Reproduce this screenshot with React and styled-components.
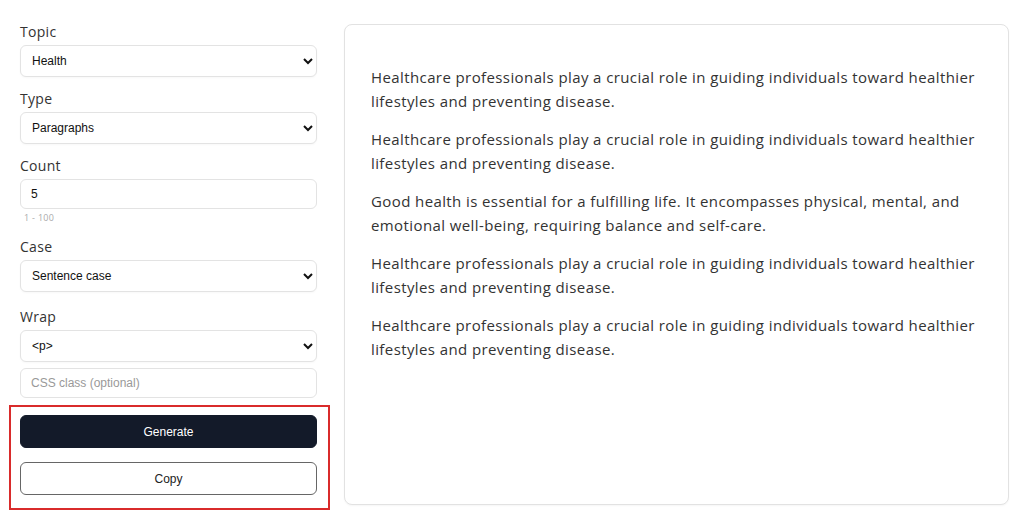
import React from "react";
import styled, { createGlobalStyle } from "styled-components";

const GlobalStyle = createGlobalStyle`
  * { box-sizing: border-box; }
  body {
    margin: 0;
    background: #ffffff;
    font-family: "Open Sans", "Liberation Sans", sans-serif;
  }
`;

const paragraphs = [
  "Healthcare professionals play a crucial role in guiding individuals toward healthier lifestyles and preventing disease.",
  "Healthcare professionals play a crucial role in guiding individuals toward healthier lifestyles and preventing disease.",
  "Good health is essential for a fulfilling life. It encompasses physical, mental, and emotional well-being, requiring balance and self-care.",
  "Healthcare professionals play a crucial role in guiding individuals toward healthier lifestyles and preventing disease.",
  "Healthcare professionals play a crucial role in guiding individuals toward healthier lifestyles and preventing disease.",
];

export default function App() {
  return (
    <>
      <GlobalStyle />
      <Page>
        <Sidebar>
          <Field>
            <Label>Topic</Label>
            <Select defaultValue="Health">
              <option>Health</option>
              <option>Technology</option>
            </Select>
          </Field>
          <Field>
            <Label>Type</Label>
            <Select defaultValue="Paragraphs">
              <option>Paragraphs</option>
              <option>Sentences</option>
            </Select>
          </Field>
          <Field>
            <Label>Count</Label>
            <Input defaultValue="5" />
            <Hint>1 - 100</Hint>
          </Field>
          <Field $gap={15}>
            <Label>Case</Label>
            <Select defaultValue="Sentence case">
              <option>Sentence case</option>
              <option>Title Case</option>
            </Select>
          </Field>
          <Field $gap={6}>
            <Label>Wrap</Label>
            <Select defaultValue="<p>">
              <option>{"<p>"}</option>
              <option>None</option>
            </Select>
          </Field>
          <Field $gap={7}>
            <Input placeholder="CSS class (optional)" />
          </Field>
          <Highlight>
            <Button $primary>Generate</Button>
            <Button>Copy</Button>
          </Highlight>
        </Sidebar>
        <Output>
          {paragraphs.map((p, i) => (
            <Paragraph key={i}>{p}</Paragraph>
          ))}
        </Output>
      </Page>
    </>
  );
}

const Page = styled.div`
  display: grid;
  grid-template-columns: 297px 665px;
  column-gap: 27px;
  padding: 22px 15px 0 20px;
  align-items: start;
`;

const Sidebar = styled.div`
  display: flex;
  flex-direction: column;
`;

const Field = styled.div`
  display: flex;
  flex-direction: column;
  margin-bottom: ${(p) => (p.$gap !== undefined ? p.$gap : 12)}px;
`;

const Label = styled.label`
  font-size: 14px;
  line-height: 20px;
  letter-spacing: 0.3px;
  color: #333;
  margin-bottom: 3px;
`;

const Select = styled.select`
  height: 32px;
  width: 100%;
  padding: 0 8px 0 7px;
  border: 1px solid #e3e3e3;
  border-radius: 6px;
  background: #fff;
  font-family: "Liberation Sans", Arial, sans-serif;
  font-size: 12px;
  color: #111;
  box-shadow: 0 1px 2px rgba(0, 0, 0, 0.03);
`;

const Input = styled.input`
  height: 30px;
  width: 100%;
  padding: 0 10px;
  border: 1px solid #e3e3e3;
  border-radius: 6px;
  background: #fff;
  font-family: "Liberation Sans", Arial, sans-serif;
  font-size: 12px;
  color: #111;
  outline: none;

  &::placeholder {
    color: #999;
  }
`;

const Hint = styled.span`
  font-size: 9px;
  line-height: 14px;
  margin-top: 2px;
  padding-left: 4px;
  letter-spacing: 0.3px;
  color: #aaa;
`;

const Highlight = styled.div`
  display: flex;
  flex-direction: column;
  gap: 14px;
  margin: 0 -13px 0 -11px;
  padding: 8px 11px 13px 9px;
  border: 2px solid #d92b2b;
`;

const Button = styled.button`
  height: 33px;
  width: 100%;
  border-radius: 6px;
  font-family: "Liberation Sans", Arial, sans-serif;
  font-size: 12px;
  cursor: pointer;
  background: ${(p) => (p.$primary ? "#131a29" : "#fff")};
  color: ${(p) => (p.$primary ? "#fff" : "#222")};
  border: 1px solid ${(p) => (p.$primary ? "#131a29" : "#666")};
`;

const Output = styled.div`
  margin-top: 2px;
  height: 481px;
  padding: 40px 26px 24px;
  border: 1px solid #e2e2e2;
  border-radius: 8px;
  background: #fff;
  box-shadow: 0 1px 2px rgba(0, 0, 0, 0.04);
`;

const Paragraph = styled.p`
  margin: 0 0 14px;
  font-size: 15px;
  line-height: 24px;
  letter-spacing: 0.4px;
  color: #333;
`;
